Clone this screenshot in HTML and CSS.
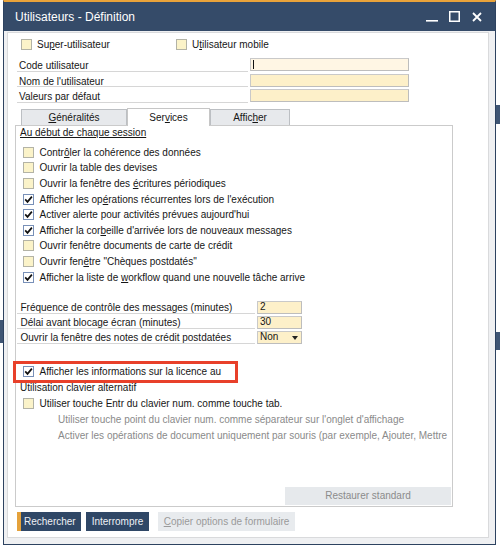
FILE: index.html
```html
<!DOCTYPE html>
<html lang="fr">
<head>
<meta charset="utf-8">
<title>Utilisateurs - Définition</title>
<link rel="stylesheet" href="styles.css">
</head>
<body>
<div class="backdrop">
  <div class="bd-bar bd-r1"></div>
  <div class="bd-bar bd-r2"></div>
  <div class="bd-bar bd-l1"></div>
</div>

<div class="dialog">
  <div class="titlebar">
    <span class="title">Utilisateurs - Définition</span>
    <div class="controls">
      <svg class="ctl-min" width="12" height="12" viewBox="0 0 12 12"><rect x="0" y="9" width="12" height="1.6" fill="#fff"/></svg>
      <svg class="ctl-max" width="11" height="11" viewBox="0 0 11 11"><rect x="0.75" y="0.75" width="9.5" height="9.5" fill="none" stroke="#fff" stroke-width="1.5"/></svg>
      <svg class="ctl-close" width="10" height="10" viewBox="0 0 10 10"><path d="M1 1 L9 9 M9 1 L1 9" stroke="#fff" stroke-width="1.8" fill="none"/></svg>
    </div>
  </div>

  <div class="client">
    <div class="form">
      <div class="toprow">
        <div class="cb cb-first"><span class="box"></span><span>Su<u>p</u>er-utilisateur</span></div>
        <div class="cb"><span class="box"></span><span>U<u>t</u>ilisateur mobile</span></div>
      </div>

      <div class="fields">
        <div class="lbl">Code utilisateur</div><div class="inp inp-focus"><span class="caret"></span></div>
        <div class="lbl">Nom de l'utilisateur</div><div class="inp"></div>
        <div class="lbl">Valeurs par défaut</div><div class="inp"></div>
      </div>

      <div class="tabs">
        <div class="tab tab-gen"><u>G</u>énéralités</div>
        <div class="tab tab-srv tab-active">Ser<u>v</u>ices</div>
        <div class="tab tab-aff">Affic<u>h</u>er</div>
      </div>

      <div class="panel">
        <div class="section-title">Au début de chaque session</div>
        <div class="list">
          <div class="item"><span class="box"></span><span>Contr<u>ô</u>ler la cohérence des données</span></div>
          <div class="item"><span class="box"></span><span>Ouvrir la table des devises</span></div>
          <div class="item"><span class="box"></span><span>Ouvrir la fenêtre des <u>é</u>critures périodiques</span></div>
          <div class="item"><span class="box box-on"><svg width="9" height="9" viewBox="0 0 9 9"><path d="M1.2 4.4 L3.5 6.9 L7.9 1.6" stroke="#111" stroke-width="1.7" fill="none"/></svg></span><span>Afficher les op<u>é</u>rations récurrentes lors de l'exécution</span></div>
          <div class="item"><span class="box box-on"><svg width="9" height="9" viewBox="0 0 9 9"><path d="M1.2 4.4 L3.5 6.9 L7.9 1.6" stroke="#111" stroke-width="1.7" fill="none"/></svg></span><span>Activer alerte pour activités prévues aujourd'hui</span></div>
          <div class="item"><span class="box box-on"><svg width="9" height="9" viewBox="0 0 9 9"><path d="M1.2 4.4 L3.5 6.9 L7.9 1.6" stroke="#111" stroke-width="1.7" fill="none"/></svg></span><span>Afficher la cor<u>b</u>eille d'arrivée lors de nouveaux messages</span></div>
          <div class="item"><span class="box"></span><span>Ouvrir fenêtre documents de carte de crédit</span></div>
          <div class="item"><span class="box"></span><span>Ouvrir fen<u>ê</u>tre "Chèques postdatés"</span></div>
          <div class="item"><span class="box box-on"><svg width="9" height="9" viewBox="0 0 9 9"><path d="M1.2 4.4 L3.5 6.9 L7.9 1.6" stroke="#111" stroke-width="1.7" fill="none"/></svg></span><span>Afficher la liste de <u>w</u>orkflow quand une nouvelle tâche arrive</span></div>
        </div>

        <div class="rows">
          <div class="rlbl">Fréquence de contrôle des messages (minutes)</div><div class="rinp">2</div>
          <div class="rlbl">Délai avant blocage écran (minutes)</div><div class="rinp">30</div>
          <div class="rlbl">Ouvrir la fenêtre des notes de crédit postdatées</div><div class="rinp rsel"><span>Non</span><span class="arrow"></span></div>
        </div>

        <div class="lower">
          <div class="item"><span class="box box-on"><svg width="9" height="9" viewBox="0 0 9 9"><path d="M1.2 4.4 L3.5 6.9 L7.9 1.6" stroke="#111" stroke-width="1.7" fill="none"/></svg></span><span>Afficher les informations sur la licence au</span></div>
          <div class="plain">Utilisation clavier alternatif</div>
          <div class="item"><span class="box"></span><span>Utiliser touche Entr du clavier num. comme touche tab.</span></div>
          <div class="sub">Utiliser touche point du clavier num. comme séparateur sur l'onglet d'affichage</div>
          <div class="sub">Activer les opérations de document uniquement par souris (par exemple, Ajouter, Mettre</div>
        </div>

        <div class="restore">Restaurer standard</div>
      </div>

      <div class="buttons">
        <div class="btn btn-primary">Rechercher</div>
        <div class="btn btn-dark">Interrompre</div>
        <div class="btn btn-disabled"><u>C</u>opier options de formulaire</div>
      </div>
    </div>
  </div>
</div>

<div class="highlight"></div>
</body>
</html>
```

FILE: styles.css
```css
html, body {
  margin: 0;
  padding: 0;
}

body {
  width: 500px;
  height: 545px;
  overflow: hidden;
  position: relative;
  background: #ffffff;
  font-family: "Liberation Sans", Arial, sans-serif;
  font-size: 10px;
  color: #161616;
}

u {
  text-decoration: underline;
  text-underline-offset: 1px;
}

/* window behind the dialog */
.backdrop {
  position: absolute;
  inset: 0;
}

.bd-bar {
  position: absolute;
  background: #3f5574;
}

.bd-r1 { left: 496px; top: 105px; width: 4px; height: 19px; }
.bd-r2 { left: 496px; top: 332px; width: 4px; height: 18px; }
.bd-l1 { left: 0; top: 320px; width: 3px; height: 23px; }

/* dialog */
.dialog {
  position: absolute;
  left: 3px;
  top: 0;
  width: 493px;
  height: 545px;
  box-sizing: border-box;
  border: 1px solid #2d4260;
  border-top: 2px solid #e9a33a;
  background: #eff0f2;
  display: flex;
  flex-direction: column;
}

.titlebar {
  height: 29px;
  flex: none;
  background: #354b69;
  display: flex;
  align-items: center;
  padding-left: 11px;
  padding-right: 13px;
  color: #ffffff;
}

.title {
  font-size: 12px;
}

.controls {
  margin-left: auto;
  display: flex;
  align-items: center;
}

.ctl-min { margin-right: 11px; }
.ctl-max { margin-right: 12px; }

.client {
  flex: 1;
  min-height: 0;
  padding: 1px 6px 6px 3px;
}

.form {
  height: 100%;
  box-sizing: border-box;
  border: 1px solid #d9dadc;
  background: #ffffff;
  padding: 5px 0 0 7px;
}

/* checkboxes */
.box {
  flex: none;
  width: 11px;
  height: 11px;
  box-sizing: border-box;
  border: 1px solid #b3b3a6;
  background: #fbf3c9;
  display: flex;
  align-items: center;
  justify-content: center;
}

.box-on {
  background: #ffffff;
  border-color: #7890b8;
}

.toprow {
  height: 13px;
  margin-left: 6px;
  display: flex;
  align-items: center;
}

.cb {
  display: flex;
  align-items: center;
  gap: 5px;
}

.cb-first {
  width: 155px;
}

/* header fields */
.fields {
  margin: 5px 0 0 2px;
  display: grid;
  grid-template-columns: 231px 159px;
  column-gap: 2px;
}

.lbl {
  height: 15.5px;
  box-sizing: border-box;
  border-bottom: 1px solid #d6d6d6;
  padding: 4px 0 0 2px;
  line-height: 11px;
}

.inp {
  height: 13px;
  margin-top: 2px;
  box-sizing: border-box;
  border: 1px solid #c9c9c9;
  border-right-color: #bdbdbd;
  border-bottom-color: #bdbdbd;
  background: #fdf0c9;
  position: relative;
}

.inp-focus {
  background: #fff6e4;
}

.caret {
  position: absolute;
  left: 2px;
  top: 1px;
  width: 1px;
  height: 9px;
  background: #111;
}

/* tabs */
.tabs {
  height: 18px;
  margin: 5px 0 -1px 6px;
  display: flex;
  align-items: flex-end;
  position: relative;
  z-index: 1;
}

.tab {
  height: 16px;
  margin-bottom: 1px;
  box-sizing: border-box;
  border: 1px solid #bcbfc3;
  border-bottom: none;
  background: #e7e9ec;
  display: flex;
  align-items: center;
  justify-content: center;
  padding-top: 1px;
}

.tab-gen { width: 106px; }
.tab-srv { width: 83px; }
.tab-aff { width: 80px; }

.tab-active {
  height: 18px;
  margin-bottom: 0;
  background: #ffffff;
  border-color: #c6c6c6;
}

/* tab panel */
.panel {
  width: 438px;
  height: 382px;
  box-sizing: border-box;
  border: 1px solid #cbcbcb;
  padding: 0 1px 1px 4px;
  display: flex;
  flex-direction: column;
  overflow: hidden;
}

.section-title {
  margin-top: 1px;
  line-height: 12px;
  text-decoration: underline;
  text-underline-offset: 1px;
}

.list {
  margin-top: 6px;
}

.item {
  height: 15.6px;
  padding-left: 3px;
  display: flex;
  align-items: center;
  gap: 5.5px;
  white-space: nowrap;
}

.rows {
  margin: 14px 0 0 -3px;
  display: grid;
  grid-template-columns: 238px 45px;
  column-gap: 2px;
}

.rlbl {
  height: 15px;
  box-sizing: border-box;
  border-bottom: 1px solid #d6d6d6;
  padding: 4px 0 0 3.5px;
  line-height: 10px;
}

.rinp {
  height: 12.5px;
  margin-top: 2.5px;
  box-sizing: border-box;
  border: 1px solid #c9c9c9;
  border-right-color: #bdbdbd;
  border-bottom-color: #bdbdbd;
  background: #fdf0c9;
  padding-left: 2px;
  line-height: 10.5px;
  display: flex;
  align-items: center;
}

.rsel {
  justify-content: space-between;
  padding-right: 3px;
}

.arrow {
  width: 0;
  height: 0;
  border-left: 3.5px solid transparent;
  border-right: 3.5px solid transparent;
  border-top: 4px solid #222;
}

.lower {
  margin-top: 20px;
}

.lower .item {
  height: 16px;
}

.plain {
  height: 16px;
  line-height: 16px;
}

.sub {
  height: 16px;
  line-height: 16px;
  padding-left: 38px;
  color: #8a8a8a;
  white-space: nowrap;
}

.restore {
  margin-top: auto;
  align-self: flex-end;
  width: 166px;
  height: 18px;
  background: #e6e9ec;
  color: #8b8b8b;
  display: flex;
  align-items: center;
  justify-content: center;
}

/* bottom buttons */
.buttons {
  margin: 5px 0 0 2px;
  height: 19px;
  display: flex;
}

.btn {
  height: 19px;
  box-sizing: border-box;
  display: flex;
  align-items: center;
  justify-content: center;
}

.btn-primary {
  width: 64px;
  background: #2f4766;
  color: #eef1f5;
  border-left: 4px solid #e5a23b;
  justify-content: flex-start;
  padding-left: 3px;
}

.btn-dark {
  width: 63px;
  margin-left: 5px;
  background: #2f4766;
  color: #eef1f5;
}

.btn-disabled {
  width: 137px;
  margin-left: 9px;
  background: #e8ebee;
  color: #9a9a9a;
}

/* annotation overlay */
.highlight {
  position: absolute;
  left: 13px;
  top: 361px;
  width: 225px;
  height: 22px;
  box-sizing: border-box;
  border: 3px solid #e8402a;
}
```
